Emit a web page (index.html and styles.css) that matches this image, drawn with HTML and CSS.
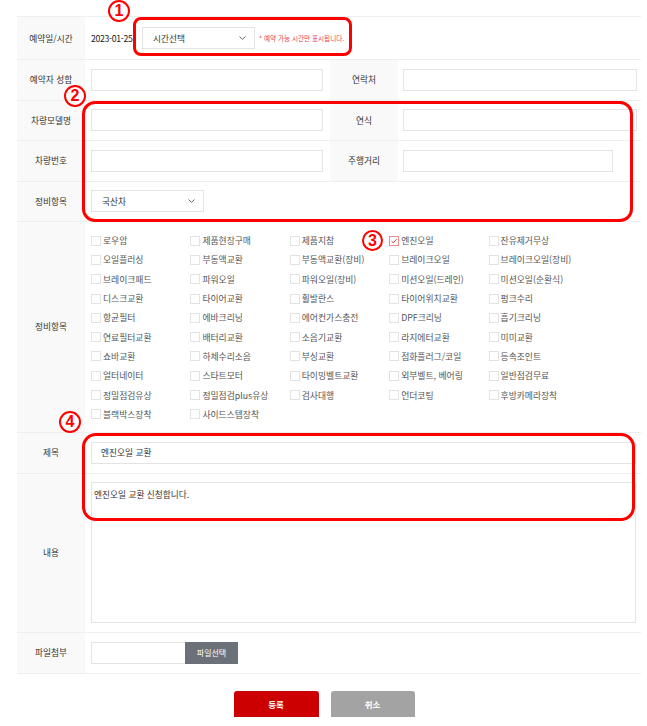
FILE: index.html
```html
<!DOCTYPE html>
<html lang="ko">
<head>
<meta charset="utf-8">
<title>예약</title>
<link rel="stylesheet" href="styles.css">
</head>
<body>
<div class="page">
  <div class="form">
    <div class="row row-first">
      <div class="th">예약일/시간</div>
      <div class="td">
        <span class="date">2023-01-25</span>
        <div class="select sel-time"><span>시간선택</span><svg width="7" height="4" viewBox="0 0 7 4"><path d="M0.5 0.5 L3.5 3.3 L6.5 0.5" fill="none" stroke="#666" stroke-width="1"/></svg></div>
        <span class="note">* 예약 가능 시간만 표시됩니다.</span>
      </div>
    </div>
    <div class="row">
      <div class="th">예약자 성함</div>
      <div class="td td-half"><div class="input w-left"></div></div>
      <div class="th">연락처</div>
      <div class="td td-right"><div class="input w-right"></div></div>
    </div>
    <div class="row">
      <div class="th">차량모델명</div>
      <div class="td td-half"><div class="input w-left"></div></div>
      <div class="th">연식</div>
      <div class="td td-right"><div class="input w-right"></div></div>
    </div>
    <div class="row">
      <div class="th">차량번호</div>
      <div class="td td-half"><div class="input w-left"></div></div>
      <div class="th">주행거리</div>
      <div class="td td-right"><div class="input w-right-short"></div></div>
    </div>
    <div class="row">
      <div class="th">정비항목</div>
      <div class="td">
        <div class="select sel-type"><span>국산차</span><svg width="7" height="4" viewBox="0 0 7 4"><path d="M0.5 0.5 L3.5 3.3 L6.5 0.5" fill="none" stroke="#666" stroke-width="1"/></svg></div>
      </div>
    </div>
    <div class="row row-checks">
      <div class="th">정비항목</div>
      <div class="td td-checks">
        <div class="checks">
          <label class="chk"><span class="box"></span>로우암</label>
          <label class="chk"><span class="box"></span>제품현장구매</label>
          <label class="chk"><span class="box"></span>제품지참</label>
          <label class="chk"><span class="box box-on"><svg width="8" height="8" viewBox="0 0 8 8"><path d="M1.6 4.2 L3.3 5.8 L6.5 2.2" fill="none" stroke="#e53935" stroke-width="1"/></svg></span>엔진오일</label>
          <label class="chk"><span class="box"></span>잔유제거무상</label>

          <label class="chk"><span class="box"></span>오일플러싱</label>
          <label class="chk"><span class="box"></span>부동액교환</label>
          <label class="chk"><span class="box"></span>부동액교환(장비)</label>
          <label class="chk"><span class="box"></span>브레이크오일</label>
          <label class="chk"><span class="box"></span>브레이크오일(장비)</label>

          <label class="chk"><span class="box"></span>브레이크패드</label>
          <label class="chk"><span class="box"></span>파워오일</label>
          <label class="chk"><span class="box"></span>파워오일(장비)</label>
          <label class="chk"><span class="box"></span>미션오일(드레인)</label>
          <label class="chk"><span class="box"></span>미션오일(순환식)</label>

          <label class="chk"><span class="box"></span>디스크교환</label>
          <label class="chk"><span class="box"></span>타이어교환</label>
          <label class="chk"><span class="box"></span>휠발란스</label>
          <label class="chk"><span class="box"></span>타이어위치교환</label>
          <label class="chk"><span class="box"></span>펑크수리</label>

          <label class="chk"><span class="box"></span>항균필터</label>
          <label class="chk"><span class="box"></span>에바크리닝</label>
          <label class="chk"><span class="box"></span>에어컨가스충전</label>
          <label class="chk"><span class="box"></span>DPF크리닝</label>
          <label class="chk"><span class="box"></span>흡기크리닝</label>

          <label class="chk"><span class="box"></span>연료필터교환</label>
          <label class="chk"><span class="box"></span>배터리교환</label>
          <label class="chk"><span class="box"></span>소음기교환</label>
          <label class="chk"><span class="box"></span>라지에터교환</label>
          <label class="chk"><span class="box"></span>미미교환</label>

          <label class="chk"><span class="box"></span>쇼바교환</label>
          <label class="chk"><span class="box"></span>하체수리소음</label>
          <label class="chk"><span class="box"></span>부싱교환</label>
          <label class="chk"><span class="box"></span>점화플러그/코일</label>
          <label class="chk"><span class="box"></span>등속조인트</label>

          <label class="chk"><span class="box"></span>얼터네이터</label>
          <label class="chk"><span class="box"></span>스타트모터</label>
          <label class="chk"><span class="box"></span>타이밍벨트교환</label>
          <label class="chk"><span class="box"></span>외부벨트, 베어링</label>
          <label class="chk"><span class="box"></span>일반점검무료</label>

          <label class="chk"><span class="box"></span>정밀점검유상</label>
          <label class="chk"><span class="box"></span>정밀점검plus유상</label>
          <label class="chk"><span class="box"></span>검사대행</label>
          <label class="chk"><span class="box"></span>언더코팅</label>
          <label class="chk"><span class="box"></span>후방카메라장착</label>

          <label class="chk"><span class="box"></span>블랙박스장착</label>
          <label class="chk"><span class="box"></span>사이드스텝장착</label>
        </div>
      </div>
    </div>
    <div class="row row-title">
      <div class="th">제목</div>
      <div class="td"><div class="input w-full input-text">엔진오일 교환</div></div>
    </div>
    <div class="row row-content">
      <div class="th">내용</div>
      <div class="td td-content"><div class="textarea">엔진오일 교환 신청합니다.</div></div>
    </div>
    <div class="row row-file">
      <div class="th">파일첨부</div>
      <div class="td">
        <div class="input w-file"></div>
        <div class="file-btn">파일선택</div>
      </div>
    </div>
  </div>

  <div class="buttons">
    <div class="btn btn-ok">등록</div>
    <div class="btn btn-cancel">취소</div>
  </div>

  <div class="mark box1"></div>
  <div class="mark box2"></div>
  <div class="mark box4"></div>
  <div class="num n1">1</div>
  <div class="num n2">2</div>
  <div class="num n3">3</div>
  <div class="num n4">4</div>
</div>
</body>
</html>
```

FILE: styles.css
```css
* { box-sizing: border-box; }
html, body { margin: 0; padding: 0; background: #fff; }
body {
  font-family: "Noto Sans CJK KR", "Noto Sans", sans-serif;
  font-size: 8.7px;
  color: #333;
}
.page {
  position: relative;
  width: 647px;
  height: 726px;
  overflow: hidden;
  padding-top: 16px;
}
.form {
  margin-left: 17px;
  width: 624px;
  border-top: 1px solid #eeeeee;
}
.row {
  display: flex;
  border-bottom: 1px solid #eeeeee;
  min-height: 40.5px;
}
.row-first { min-height: 43px; }
.th {
  width: 68px;
  flex: none;
  background: #f9f9f9;
  display: flex;
  align-items: center;
  justify-content: center;
  color: #333;
  white-space: nowrap;
}
.td {
  flex: 1;
  display: flex;
  align-items: center;
  padding-left: 6px;
}
.td-half { flex: none; width: 245px; }
.td-right { padding-left: 5px; }
.date {
  width: 51px;
  color: #222;
  letter-spacing: -0.3px;
}
.select {
  height: 22px;
  border: 1px solid #e4e4e4;
  background: #fff;
  display: flex;
  align-items: center;
  justify-content: space-between;
  padding: 0 8px 0 10px;
  color: #333;
}
.sel-time { width: 113px; }
.sel-type { width: 113px; }
.note {
  margin-left: 4px;
  color: #ea3d52;
  font-size: 6.6px;
}
.input {
  height: 22px;
  border: 1px solid #e4e4e4;
  background: #fff;
}
.w-left { width: 232px; }
.w-right { width: 234px; }
.w-right-short { width: 210px; }
.w-full { width: 545px; }
.input-text {
  display: flex;
  align-items: center;
  padding-left: 9px;
  color: #333;
}
.w-file { width: 94px; border-right: none; }
.file-btn {
  width: 53px;
  height: 22px;
  background: #6b7079;
  color: #fff;
  display: flex;
  align-items: center;
  justify-content: center;
  font-size: 8px;
}
.td-checks { align-items: flex-start; padding-top: 9px; padding-bottom: 8px; }
.checks {
  display: grid;
  grid-template-columns: repeat(5, 99.4px);
  grid-auto-rows: 19.3px;
}
.chk {
  display: flex;
  align-items: center;
  color: #555;
  white-space: nowrap;
  font-size: 8.8px;
}
.box {
  width: 10px;
  height: 10px;
  border: 1px solid #e3e3e3;
  background: #fff;
  margin-right: 2px;
  flex: none;
  display: flex;
  align-items: center;
  justify-content: center;
}
.box-on { border-color: #ef8a8a; }
.box-on svg { display: block; }
.row-title { min-height: 41px; }
.row-content { min-height: 159px; }
.td-content { align-items: flex-start; padding-top: 8px; }
.textarea {
  width: 545px;
  height: 141px;
  border: 1px solid #e4e4e4;
  padding: 6px 2px;
  line-height: 11px;
  color: #333;
}
.row-file { min-height: 41px; }
.buttons {
  display: flex;
  justify-content: center;
  gap: 12px;
  margin-top: 17px;
  padding-left: 1px;
}
.btn {
  width: 85px;
  height: 26px;
  border-radius: 3px 3px 0 0;
  color: #fff;
  display: flex;
  align-items: center;
  justify-content: center;
  font-size: 8.5px;
  font-weight: 700;
}
.btn-ok { background: #cc0000; }
.btn-cancel { background: #a3a3a3; width: 84px; }

/* annotation overlays */
.mark {
  position: absolute;
  border: 3px solid #ff0000;
}
.box1 { left: 133px; top: 17px; width: 219px; height: 39px; border-radius: 8px; }
.box2 { left: 82px; top: 101px; width: 551px; height: 121px; border-radius: 13px; }
.box4 { left: 82px; top: 433px; width: 553px; height: 88px; border-radius: 14px; }
.num {
  position: absolute;
  width: 22px;
  height: 22px;
  border: 2px solid #ff0000;
  border-radius: 50%;
  background: #fff;
  color: #ff0000;
  font-family: "Liberation Sans", Arial, sans-serif;
  font-weight: 700;
  font-size: 16px;
  line-height: 18px;
  text-align: center;
}
.n1 { left: 108px; top: 0px; }
.n2 { left: 64px; top: 85px; }
.n3 { left: 362px; top: 230px; width: 21px; height: 21px; line-height: 17px; }
.n4 { left: 59px; top: 411px; }
```
